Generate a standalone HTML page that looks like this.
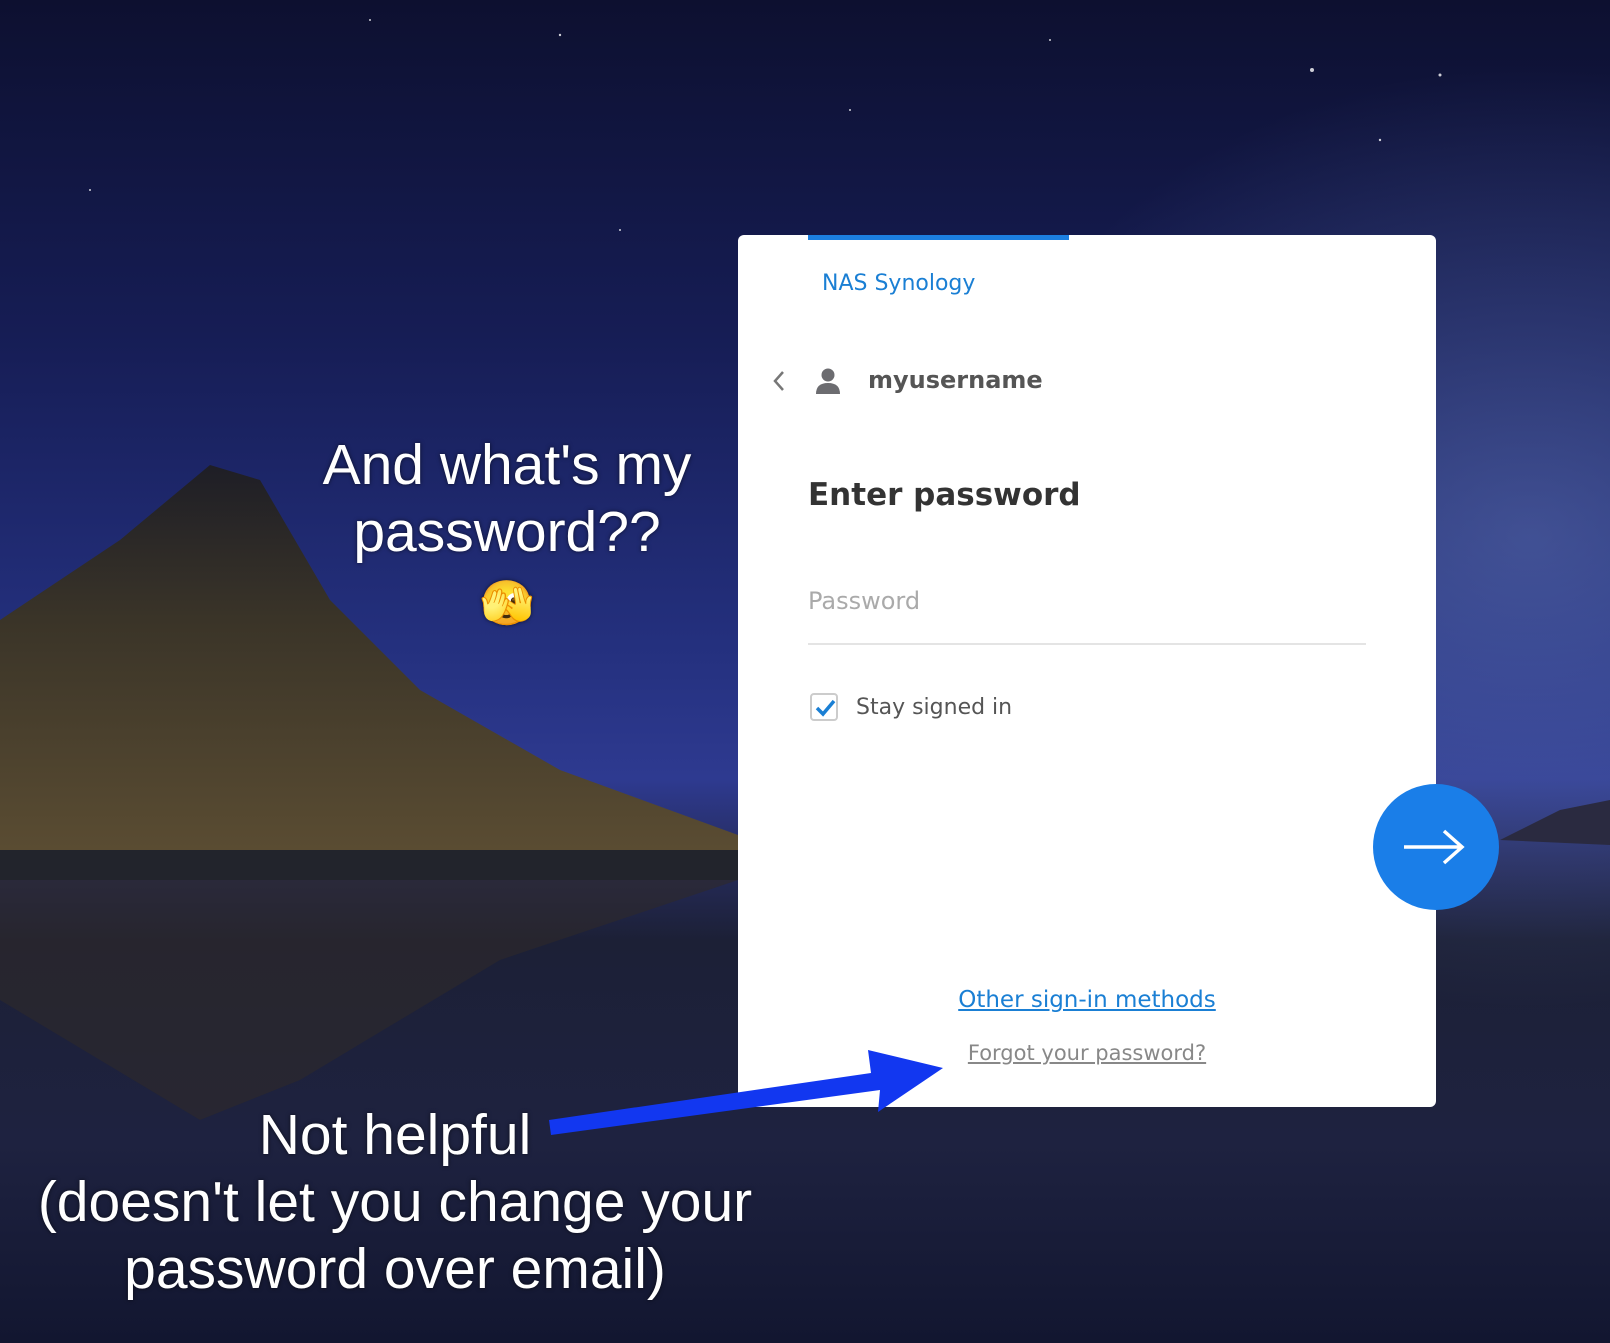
<!DOCTYPE html>
<html><head><meta charset="utf-8"><style>
html,body{margin:0;padding:0;width:1610px;height:1343px;overflow:hidden;font-family:"Liberation Sans",sans-serif}
.bg{position:absolute;inset:0;background:linear-gradient(180deg,#0d1030 0%,#161d55 25%,#24307e 48%,#2e3a90 58%,#262c5e 64%,#1c2036 70%,#1e2240 85%,#121630 100%)}
.card{position:absolute;left:738px;top:235px;width:698px;height:872px;background:#fff;border-radius:6px}
.tab{position:absolute;left:70px;top:0;width:261px;height:5px;background:#1c7fe0}
.t{position:absolute;white-space:nowrap}
.ann{position:absolute;color:#fff;text-align:center;font-size:57px;line-height:67px;text-shadow:0 0 4px rgba(0,0,0,.6)}
</style></head><body>
<div class="bg"></div>
<svg width="1610" height="1343" style="position:absolute;left:0;top:0">
<defs><linearGradient id="m" x1="0" y1="0" x2="0" y2="1"><stop offset="0" stop-color="#1e1e26"/><stop offset=".4" stop-color="#3a3428"/><stop offset="1" stop-color="#5a4c32"/></linearGradient>
<radialGradient id="g" cx=".95" cy=".4" r=".35"><stop offset="0" stop-color="#6a80c0" stop-opacity=".45"/><stop offset="1" stop-color="#6a80c0" stop-opacity="0"/></radialGradient></defs>
<rect width="1610" height="1343" fill="url(#g)"/>
<path d="M0 620 L120 540 L210 465 L260 480 L330 600 L420 690 L560 770 L738 835 L738 850 L0 850Z" fill="url(#m)"/>
<path d="M0 850 L738 850 L738 880 L0 880Z" fill="#22242c"/>
<path d="M0 880 L738 880 L500 960 L300 1080 L200 1120 L0 1000Z" fill="#2e2a2a" opacity=".6"/>
<path d="M1500 840 L1560 810 L1610 800 L1610 845Z" fill="#2a2a40"/>
<g fill="#fff" opacity=".8"><circle cx="1312" cy="70" r="2"/><circle cx="1440" cy="75" r="1.5"/><circle cx="560" cy="35" r="1.2"/><circle cx="1380" cy="140" r="1.2"/><circle cx="370" cy="20" r="1"/><circle cx="1050" cy="40" r="1"/><circle cx="90" cy="190" r="1"/><circle cx="620" cy="230" r="1"/><circle cx="850" cy="110" r="1"/></g>
</svg>
<div class="ann" style="left:257px;width:500px;top:432px">And what's my<br>password??<br><span style="font-size:44px;font-family:'Noto Sans CJK JP',sans-serif">🫣</span></div>
<div class="ann" style="left:0;width:790px;top:1102px">Not helpful<br>(doesn't let you change your<br>password over email)</div>
<div class="card">
<div class="tab"></div>
<div class="t" style="left:84px;top:36px;font-size:22px;color:#1a7fd4;font-family:'DejaVu Sans',sans-serif">NAS Synology</div>
<svg class="t" style="left:33px;top:134px" width="16" height="24"><path d="M12 3 L4 12 L12 21" stroke="#777" stroke-width="2.5" fill="none"/></svg>
<svg class="t" style="left:77px;top:132px" width="26" height="28"><circle cx="13" cy="8" r="6.5" fill="#6c6c70"/><path d="M1 27 Q1 16 13 16 Q25 16 25 27Z" fill="#6c6c70"/></svg>
<div class="t" style="left:130px;top:131px;font-size:24px;font-weight:bold;color:#555;font-family:'DejaVu Sans',sans-serif">myusername</div>
<div class="t" style="left:70px;top:242px;font-size:31px;font-weight:bold;color:#333;font-family:'DejaVu Sans',sans-serif">Enter password</div>
<div class="t" style="left:70px;top:352px;font-size:24px;color:#aaa;font-family:'DejaVu Sans',sans-serif">Password</div>
<div class="t" style="left:70px;top:408px;width:558px;height:2px;background:#e4e4e4"></div>
<div class="t" style="left:72px;top:458px;width:28px;height:28px;border:2px solid #ccc;border-radius:4px;box-sizing:border-box"></div>
<svg class="t" style="left:74px;top:460px" width="26" height="26"><path d="M5 13 L11 19 L22 6" stroke="#1a7fd4" stroke-width="3.5" fill="none"/></svg>
<div class="t" style="left:118px;top:460px;font-size:22px;color:#555;font-family:'DejaVu Sans',sans-serif">Stay signed in</div>
<div class="t" style="left:0;width:698px;text-align:center;top:752px;font-size:23px;color:#1a7fd4;text-decoration:underline;font-family:'DejaVu Sans',sans-serif">Other sign-in methods</div>
<div class="t" style="left:0;width:698px;text-align:center;top:806px;font-size:21px;color:#888;text-decoration:underline;font-family:'DejaVu Sans',sans-serif">Forgot your password?</div>
</div>
<svg width="1610" height="1343" style="position:absolute;left:0;top:0">
<path d="M551 1135 L880 1090 L878 1112 L943 1068 L868 1050 L871 1073 L549 1120Z" fill="#1237f0"/>
</svg>
<div style="position:absolute;left:1373px;top:784px;width:126px;height:126px;border-radius:50%;background:#1a7ee8"></div>
<svg style="position:absolute;left:1400px;top:825px" width="70" height="44"><path d="M4 22 H62 M44 6 L62 22 L44 38" stroke="#fff" stroke-width="3.5" fill="none"/></svg>
</body></html>
